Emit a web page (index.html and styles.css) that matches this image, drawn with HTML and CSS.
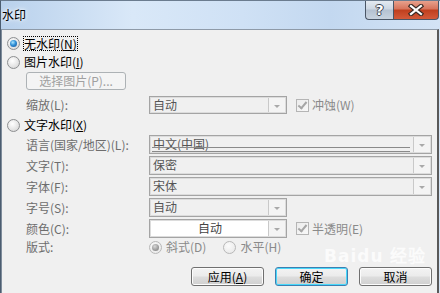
FILE: index.html
```html
<!DOCTYPE html>
<html lang="zh-CN">
<head>
    <meta charset="UTF-8">
    <title>水印</title>
    <link rel="stylesheet" href="styles.css">
</head>
<body>
    <div class="window">
        <!-- Title bar -->
        <div class="titlebar">
            <span class="title">水印</span>
            <div class="caption-btns">
                <div class="cap-btn help">?</div>
                <div class="cap-btn close">
                    <svg width="16" height="12" viewBox="0 0 16 12">
                        <path d="M3 2 L13 10 M13 2 L3 10" stroke="#3a2a24" stroke-width="4.5" stroke-linecap="square" fill="none"/>
                        <path d="M3 2 L13 10 M13 2 L3 10" stroke="#fff" stroke-width="2.2" stroke-linecap="square" fill="none"/>
                    </svg>
                </div>
            </div>
        </div>

        <div class="client">
            <div class="row r-first">
                <span class="radio checked"></span>
                <span class="focus">无水印(<u>N</u>)</span>
            </div>
            <div class="row r-radio">
                <span class="radio"></span>
                <span class="opt">图片水印(<u>I</u>)</span>
            </div>
            <div class="row r-btn">
                <div class="btn disabled">选择图片(P)...</div>
            </div>
            <div class="row field r-scale">
                <span class="label">缩放(L):</span>
                <div class="combo short"><span class="val">自动</span><span class="drop"></span></div>
                <span class="check"></span>
                <span class="muted">冲蚀(W)</span>
            </div>
            <div class="row r-radio">
                <span class="radio"></span>
                <span class="opt">文字水印(<u>X</u>)</span>
            </div>
            <div class="row field r-combo r-lang">
                <span class="label">语言(国家/地区)(L):</span>
                <div class="combo long"><span class="val lined">中文(中国)</span><span class="drop"></span></div>
            </div>
            <div class="row field r-combo">
                <span class="label">文字(T):</span>
                <div class="combo long"><span class="val">保密</span><span class="drop"></span></div>
            </div>
            <div class="row field r-combo">
                <span class="label">字体(F):</span>
                <div class="combo long"><span class="val">宋体</span><span class="drop"></span></div>
            </div>
            <div class="row field r-combo">
                <span class="label">字号(S):</span>
                <div class="combo short"><span class="val">自动</span><span class="drop"></span></div>
            </div>
            <div class="row field r-combo">
                <span class="label">颜色(C):</span>
                <div class="combo short white"><span class="val center">自动</span><span class="drop"></span></div>
                <span class="check"></span>
                <span class="muted">半透明(E)</span>
            </div>
            <div class="row field r-layout">
                <span class="label">版式:</span>
                <span class="radio checked off"></span>
                <span class="muted">斜式(D)</span>
                <span class="radio off second"></span>
                <span class="muted">水平(H)</span>
            </div>
            <div class="row r-actions">
                <div class="btn">应用(<u>A</u>)</div>
                <div class="btn default">确定</div>
                <div class="btn">取消</div>
            </div>

            <div class="baidu">Bai<span class="paw">du</span> 经验</div>
        </div>
    </div>
</body>
</html>
```

FILE: styles.css
```css
* {
    box-sizing: border-box;
    margin: 0;
    padding: 0;
}

body {
    font-family: "Noto Sans CJK SC", "Liberation Sans", sans-serif;
    font-size: 12px;
    color: #000;
    background: #f0f0f0;
}

.window {
    width: 440px;
    height: 293px;
    overflow: hidden;
    display: flex;
    flex-direction: column;
    background: linear-gradient(90deg, #b9d1ec 0%, #d9e8f8 30%, #cfe1f5 55%, #c3d8f0 75%, #d3e3f5 100%);
    border-left: 1px solid #4c5d70;
    border-top: 1px solid #6b7c8f;
}

/* Title bar */
.titlebar {
    height: 28px;
    display: flex;
    justify-content: space-between;
    align-items: flex-start;
    flex-shrink: 0;
}

.title {
    margin: 6px 0 0 1px;
    line-height: 16px;
    text-shadow: 0 0 6px #fff, 0 0 3px #fff;
}

.caption-btns {
    display: flex;
    margin-top: -1px;
    margin-right: 1px;
}

.cap-btn {
    height: 20px;
    display: flex;
    align-items: center;
    justify-content: center;
    border: 1px solid #4a5666;
    border-top: none;
}

.help {
    width: 28px;
    border-radius: 0 0 0 4px;
    border-right: none;
    background: linear-gradient(#e6ecf3 0%, #ccd6e2 48%, #b4c1d1 52%, #c8d3df 100%);
    color: #fff;
    font: bold 14px "DejaVu Sans", sans-serif;
    text-shadow: -1px 0 #3b4350, 1px 0 #3b4350, 0 -1px #3b4350, 0 1px #3b4350;
}

.close {
    width: 46px;
    border-radius: 0 0 4px 0;
    background: linear-gradient(#eaa793 0%, #d8765e 45%, #c0401f 55%, #d35a3a 100%);
}

/* Client area */
.client {
    position: relative;
    flex: 1;
    margin-right: 1px;
    background: #f0f0f0;
    border-top: 1px solid #8e9aa8;
    border-left: 1px solid #7e8c9b;
    border-right: 2px solid #595959;
    padding: 0 5px 0 5px;
    display: flex;
    flex-direction: column;
}

.row {
    display: flex;
    align-items: center;
    height: 16px;
    line-height: 16px;
    white-space: nowrap;
}

.r-first { margin-top: 5px; }
.r-radio { margin-top: 3px; }
.r-btn { margin-top: 2px; height: 18px; padding-left: 19px; }
.r-scale { margin-top: 6px; height: 18px; }
.r-combo { margin-top: 2px; height: 19px; }
.r-lang { margin-top: 2px; }
.r-layout { margin-top: 1px; }
.r-actions {
    margin-top: 12px;
    height: 19px;
    justify-content: flex-end;
    gap: 11px;
}

.field { padding-left: 19px; }

.label {
    width: 123px;
    color: #6d6d6d;
}

.muted { color: #8a8a8a; }

u { text-decoration: underline; text-underline-offset: 1px; }

.focus {
    margin-left: 3px;
    padding: 0 1px;
    outline: 1px dotted #000;
    outline-offset: -1px;
    line-height: 15px;
}

.opt { margin-left: 4px; }

/* Radio buttons */
.radio {
    position: relative;
    width: 13px;
    height: 13px;
    flex-shrink: 0;
    border-radius: 50%;
    border: 1px solid #8d8f91;
    background: radial-gradient(circle at 40% 35%, #ffffff 0%, #e6e6e6 55%, #cfcfcf 100%);
}

.radio.checked::after {
    content: "";
    position: absolute;
    left: 2px;
    top: 2px;
    width: 7px;
    height: 7px;
    border-radius: 50%;
    background: radial-gradient(circle at 40% 35%, #aee6ff 0%, #2f8fd6 45%, #1a4f92 100%);
}

.radio.off {
    border-color: #b8b8b8;
    background: radial-gradient(circle at 40% 35%, #fbfbfb 0%, #ececec 70%);
}

.radio.off.checked::after {
    background: radial-gradient(circle at 40% 35%, #d8d8d8 0%, #9a9a9a 60%, #7f7f7f 100%);
}

.radio.off + .muted { margin-left: 4px; }
.radio.second { margin-left: 17px; }

/* Check boxes */
.check {
    position: relative;
    width: 13px;
    height: 13px;
    flex-shrink: 0;
    margin: 0 3px 0 9px;
    border: 1px solid #b5b5b5;
    background: linear-gradient(135deg, #ececec, #f8f8f8);
}

.check::after {
    content: "";
    position: absolute;
    left: 3px;
    top: 0px;
    width: 3px;
    height: 7px;
    border-right: 2px solid #a6a6a6;
    border-bottom: 2px solid #a6a6a6;
    transform: rotate(40deg);
}

/* Combo boxes */
.combo {
    height: 18px;
    display: flex;
    border: 1px solid #a4a4a4;
    box-shadow: inset 0 0 0 1px #dcdcdc;
    background: #f0f0f0;
    color: #555;
}

.combo.short { width: 138px; }
.combo.long { width: 283px; }
.r-combo .combo { height: 19px; }
.combo.white { background: #fff; }

.val {
    flex: 1;
    padding-left: 3px;
    line-height: 16px;
    position: relative;
}

.val.center {
    text-align: center;
    color: #444;
}

.val.lined::after {
    content: "";
    position: absolute;
    left: 2px;
    right: 2px;
    bottom: 1px;
    height: 3px;
    border-top: 1px solid #8a8a8a;
    border-bottom: 1px solid #8a8a8a;
}

.drop {
    width: 17px;
    margin: 1px;
    border-left: 1px solid #c9c9c9;
    background: #f4f4f4;
    display: flex;
    align-items: center;
    justify-content: center;
}

.drop::after {
    content: "";
    border-left: 3px solid transparent;
    border-right: 3px solid transparent;
    border-top: 3px solid #a9a9a9;
    margin-top: 2px;
}

/* Push buttons */
.btn {
    width: 73px;
    height: 19px;
    display: flex;
    align-items: center;
    justify-content: center;
    border: 1px solid #707070;
    border-radius: 3px;
    background: linear-gradient(#f3f3f3 0%, #ebebeb 48%, #dddddd 52%, #cfcfcf 100%);
    box-shadow: inset 0 0 0 1px #fcfcfc;
}

.btn.default {
    border-color: #3c7fb1;
    box-shadow: inset 0 0 0 1px #48d8fb;
}

.btn.disabled {
    width: 100px;
    height: 18px;
    border-color: #adb2b5;
    background: #f4f4f4;
    box-shadow: none;
    color: #a0a0a0;
}

/* faint photo watermark */
.baidu {
    position: absolute;
    left: 322px;
    top: 212px;
    line-height: 20px;
    color: rgba(255, 255, 255, 0.75);
    font: bold 17px "DejaVu Sans", sans-serif;
    letter-spacing: 1px;
    pointer-events: none;
}
```
